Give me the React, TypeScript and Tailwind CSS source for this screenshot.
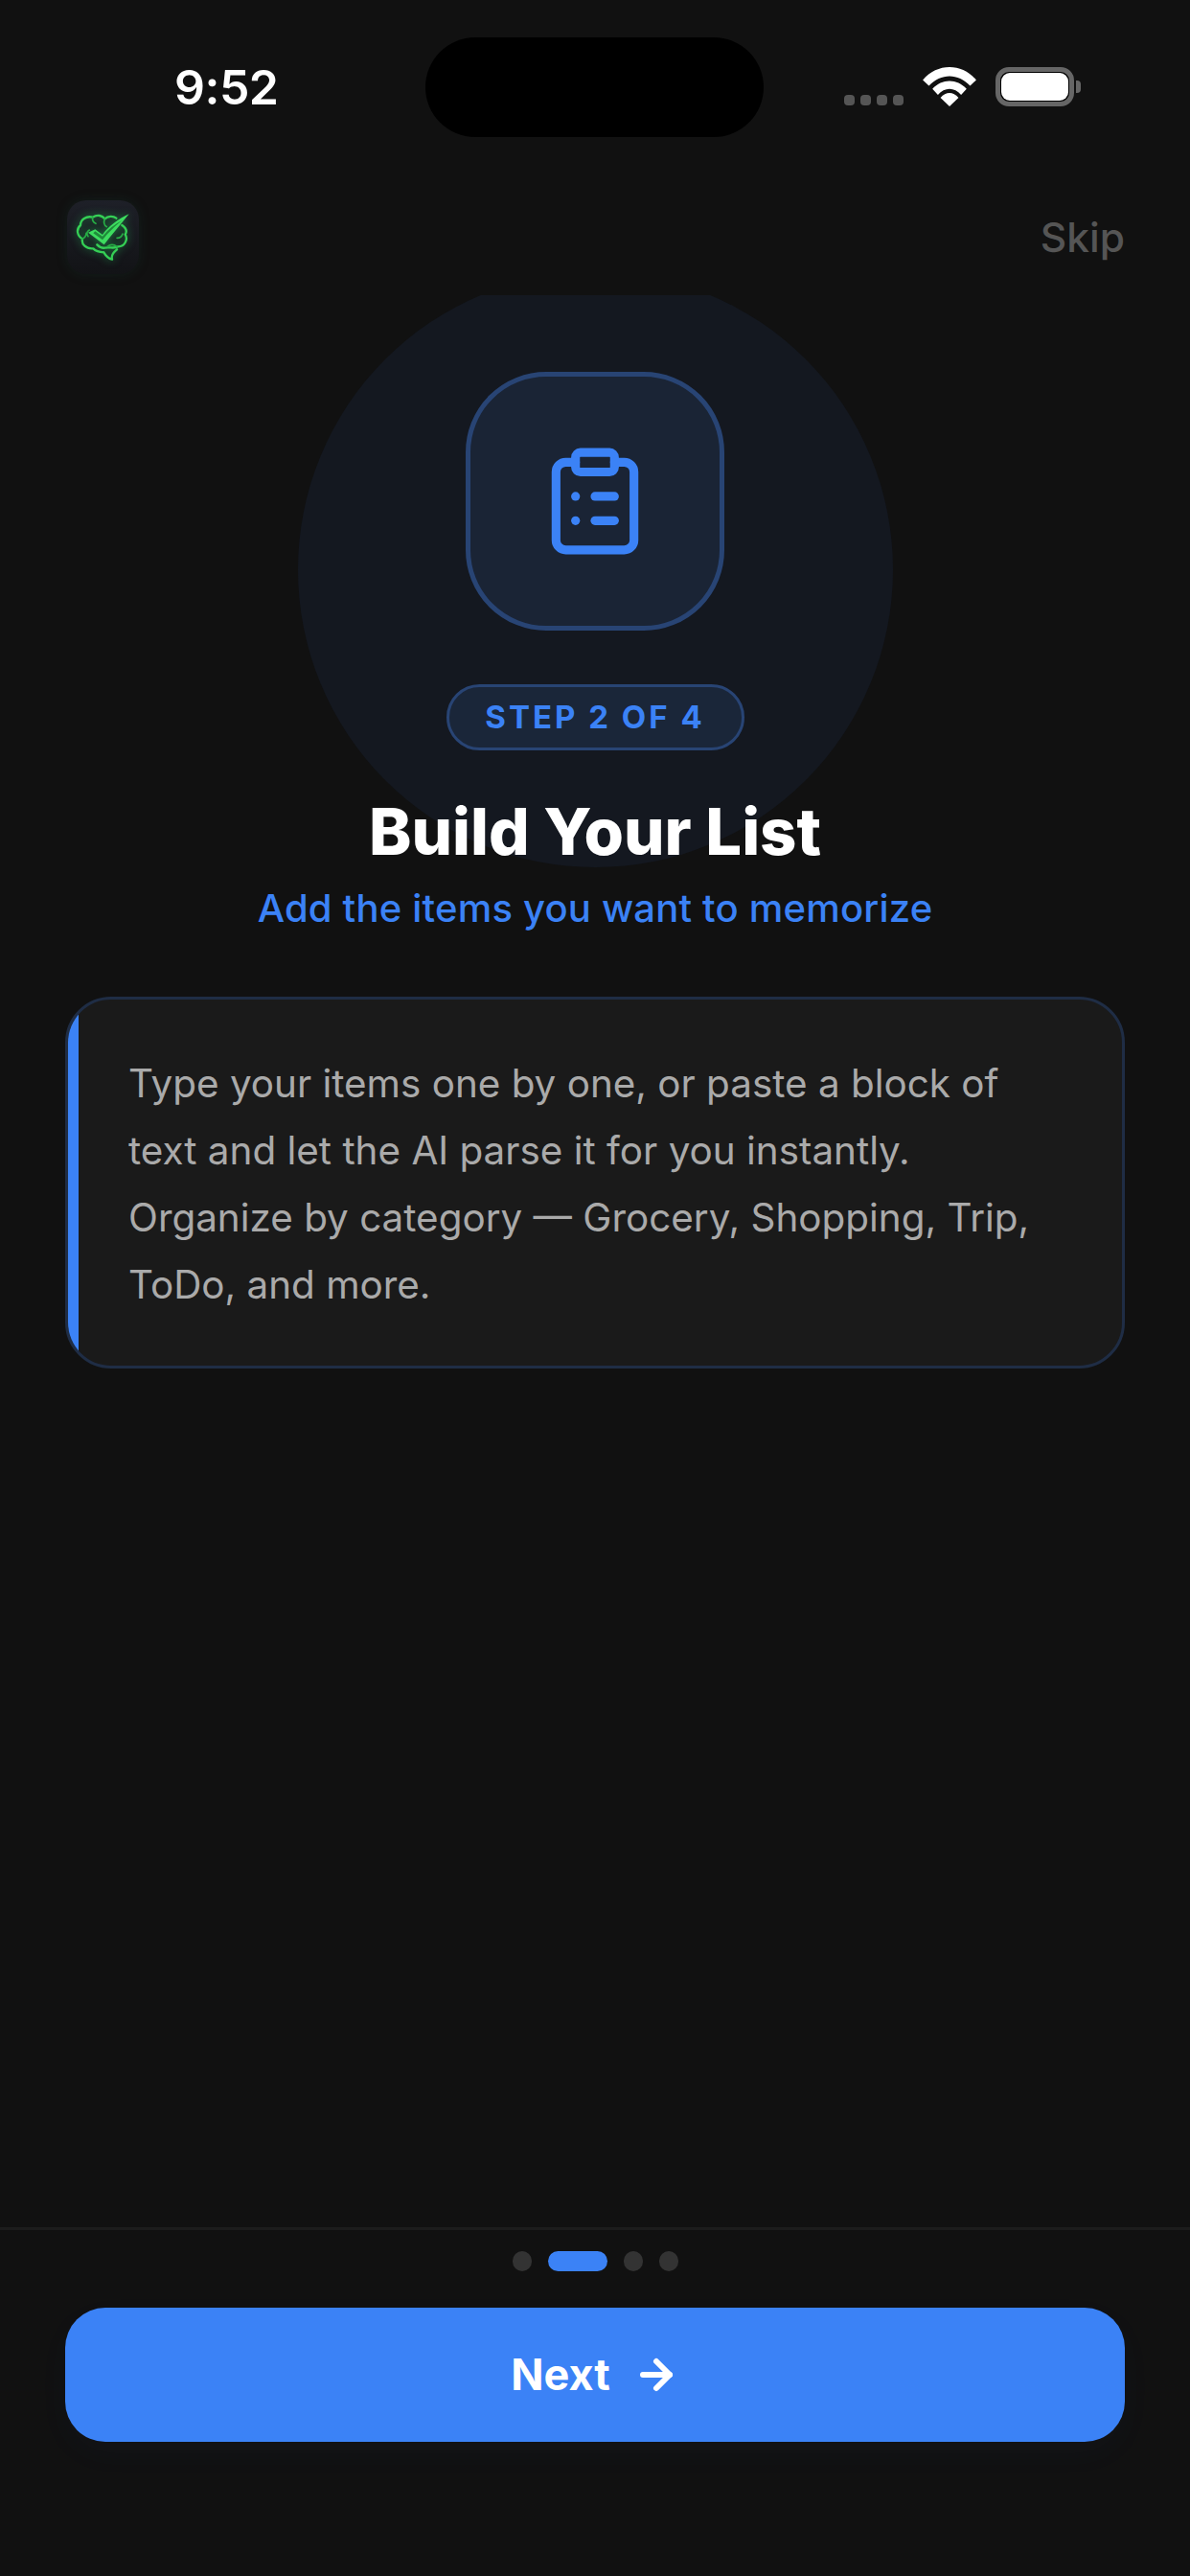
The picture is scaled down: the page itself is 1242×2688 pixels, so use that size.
import { ArrowRight, ClipboardList } from "lucide-react";

function Brain() {
  return (
    <svg viewBox="90 88 225 229" className="h-full w-full [filter:drop-shadow(0_0_4px_rgba(34,197,94,0.6))]" fill="none">
      <path
        d="M205 250C193 249 180 246 172 238C150 240 134 225 138 208C122 199 117 178 132 165C132 148 150 135 170 140C185 130 200 135 208 145C218 136 234 135 244 143M262 165C272 172 280 182 272 194C282 210 270 232 250 232C238 240 222 232 208 236C196 238 190 232 184 226M205 250C212 262 222 270 231 272C228 262 232 252 246 241"
        stroke="#35cf55"
        strokeWidth="7"
        strokeLinecap="round"
        strokeLinejoin="round"
      />
      <path
        d="M170 140C168 150 172 156 180 160M138 208C146 204 150 198 150 190M160 180C152 184 150 192 156 200M208 145C204 155 206 165 214 170M246 205C256 205 262 200 264 192M216 232C226 224 236 224 246 232"
        stroke="#27ad45"
        strokeWidth="5"
        strokeLinecap="round"
      />
      <path d="M156 188L178 178L201 195C220 168 250 146 284 130C256 165 228 197 206 226Z" fill="#3ddc5f" />
      <path d="M172 190L201 211C222 185 240 168 262 150C240 162 218 178 201 200L178 184Z" fill="#1f8a3a" />
    </svg>
  );
}

function Wifi() {
  return (
    <svg viewBox="310 60 166 122" className="h-[41px] w-[56px]" fill="#ffffff">
      <path d="M393 182L365 155C382 135 404 135 421 155Z" />
      <path d="M340 128C370 95 416 95 446 128L429 146C408 122 378 122 357 146Z" />
      <path d="M310 100C355 47 431 47 476 100L457 118C420 78 366 78 329 118Z" />
    </svg>
  );
}

export default function App() {
  return (
    <div className="flex min-h-[2688px] w-full flex-col bg-[#111111] font-['Inter',sans-serif]">
      <div className="flex h-[180px] items-start pl-[182px] pt-[39px]">
        <div className="w-[262px] pt-[29px] text-[50px] font-semibold leading-[46px] tracking-[-0.5px] text-white">9:52</div>
        <div className="h-[104px] w-[353px] rounded-[52px] bg-black" />
        <div className="ml-[84px] flex items-end pt-[31px]">
          <div className="mb-[1px] flex gap-[6px]">
            <div className="h-[11px] w-[11px] rounded-[4px] bg-[#555555]" />
            <div className="h-[11px] w-[11px] rounded-[4px] bg-[#555555]" />
            <div className="h-[11px] w-[11px] rounded-[4px] bg-[#555555]" />
            <div className="h-[11px] w-[11px] rounded-[4px] bg-[#555555]" />
          </div>
          <div className="ml-[20px]">
            <Wifi />
          </div>
          <div className="ml-[20px] flex items-center gap-[2px]">
            <div className="h-[41px] w-[82px] rounded-[14px] border-[5px] border-[#666666] bg-black p-[1px]">
              <div className="h-full w-full rounded-[9px] bg-white" />
            </div>
            <div className="h-[13px] w-[5px] rounded-r-[4px] bg-[#666666]" />
          </div>
        </div>
      </div>

      <div className="flex h-[128px] items-start justify-between pl-[70px] pr-[68px] pt-[29px]">
        <div className="h-[77px] w-[75px] rounded-[20px] bg-gradient-to-b from-[#1e2028] to-[#121316] shadow-[0_0_12px_rgba(20,60,50,0.3)]">
          <Brain />
        </div>
        <div className="pt-[14px] text-[42.5px] font-medium leading-[50px] text-[#555555]">Skip</div>
      </div>

      <div className="relative flex flex-col items-center overflow-hidden pt-[80px]">
        <div className="absolute left-[311px] top-[-24px] h-[621px] w-[621px] rounded-full bg-[#141820]" />
        <div className="relative flex h-[270px] w-[270px] items-center justify-center rounded-[84px] border-[5px] border-[#284474] bg-[#1a2435]">
          <ClipboardList size={122} color="#3b82f6" strokeWidth={1.8} />
        </div>
        <div className="relative mt-[56px] flex h-[69px] w-[311px] items-center justify-center rounded-full border-[3px] border-[#284474] bg-[#1a2639] text-[33px] font-bold tracking-[3px] text-[#3b82f6]">
          STEP 2 OF 4
        </div>
        <h1 className="relative mt-[45px] text-[67px] font-extrabold leading-[80px] text-white">Build Your List</h1>
        <p className="relative mt-[14px] text-[40px] font-medium leading-[52px] tracking-[0.2px] text-[#3b82f6]">Add the items you want to memorize</p>
      </div>

      <div className="mx-[68px] mt-[66px] flex overflow-hidden rounded-[48px] border-[3px] border-[#1f2d45] bg-[#1a1a1a]">
        <div className="w-[11px] shrink-0 bg-[#3b82f6]" />
        <div className="flex-1 pb-[49px] pl-[52px] pr-[54px] pt-[53px] text-[40.4px] leading-[70px] text-[#aaaaaa]">
          Type your items one by one, or paste a block of text and let the AI parse it for you instantly. Organize by category — Grocery, Shopping, Trip, ToDo, and more.
        </div>
      </div>

      <div className="flex-1" />

      <div className="flex h-[364px] flex-col items-center border-t-[3px] border-[#1c1c1c] pt-[22px]">
        <div className="flex items-center gap-[17px]">
          <div className="h-[21px] w-[20px] rounded-full bg-[#333333]" />
          <div className="h-[21px] w-[62px] rounded-full bg-[#3b82f6]" />
          <div className="h-[21px] w-[20px] rounded-full bg-[#333333]" />
          <div className="h-[21px] w-[20px] rounded-full bg-[#333333]" />
        </div>
        <div className="mt-[38px] flex h-[140px] w-[1106px] items-center justify-center gap-[24px] rounded-[42px] bg-[#3b82f6] text-[45px] font-bold text-white shadow-[0_12px_36px_rgba(59,130,246,0.03)]">
          <span>Next</span>
          <ArrowRight size={48} strokeWidth={3} />
        </div>
      </div>
    </div>
  );
}
